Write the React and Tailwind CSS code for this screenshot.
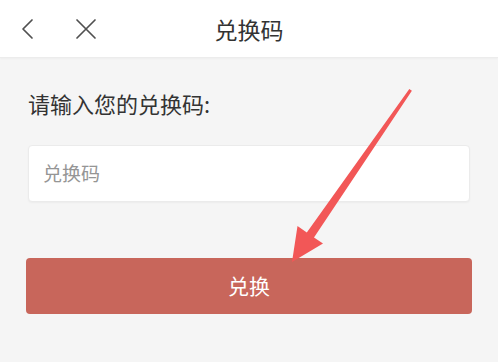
import React from "react";

const font = { fontFamily: '"Noto Sans CJK SC", "Noto Sans", sans-serif' };

const RedeemPage = () => {
  return (
    <div
      className="relative w-[498px] h-[362px] overflow-hidden bg-[#f5f5f5]"
      style={font}
    >
      {/* header */}
      <div className="relative flex items-center h-[58px] bg-white border-b border-[#ececec] shadow-[0_1px_2px_rgba(0,0,0,0.03)]">
        <button className="ml-[19px] w-[16px] h-[24px] flex items-center justify-center">
          <svg width="14" height="22" viewBox="0 0 14 22" fill="none">
            <path d="M12 2 L3 11 L12 20" stroke="#505050" strokeWidth="1.7" strokeLinecap="round" strokeLinejoin="round" />
          </svg>
        </button>
        <button className="ml-[40px] w-[22px] h-[22px] flex items-center justify-center">
          <svg width="22" height="22" viewBox="0 0 22 22" fill="none">
            <path d="M2 2 L20 20 M20 2 L2 20" stroke="#505050" strokeWidth="1.7" strokeLinecap="round" />
          </svg>
        </button>
        <h1 className="absolute left-0 right-0 text-center text-[23px] leading-[30px] text-[#333] pointer-events-none">
          兑换码
        </h1>
      </div>

      {/* form */}
      <div className="flex flex-col px-[26px] pt-[30px]">
        <p className="ml-[2px] text-[22px] leading-[30px] text-[#333]">
          请输入您的兑换码:
        </p>
        <div className="mx-[2px] mt-[27px] h-[57px] flex items-center bg-white rounded-[4px] border border-[#ebebeb] shadow-[0_1px_2px_rgba(0,0,0,0.04)] px-[14px]">
          <span className="text-[19px] text-[#959595]">兑换码</span>
        </div>
        <button className="mt-[56px] h-[56px] rounded-[4px] bg-[#c8665b] text-white text-[21px] flex items-center justify-center">
          兑换
        </button>
      </div>

      {/* annotation arrow */}
      <svg
        className="absolute left-0 top-0 pointer-events-none"
        width="498"
        height="362"
        viewBox="0 0 498 362"
      >
        <polygon
          points="409.3,89 411.9,90.8 314,237.4 323,243.5 292,262 297.5,226 306.8,232.6"
          fill="#f25757"
        />
      </svg>
    </div>
  );
};

export default function App() {
  return <RedeemPage />;
}
